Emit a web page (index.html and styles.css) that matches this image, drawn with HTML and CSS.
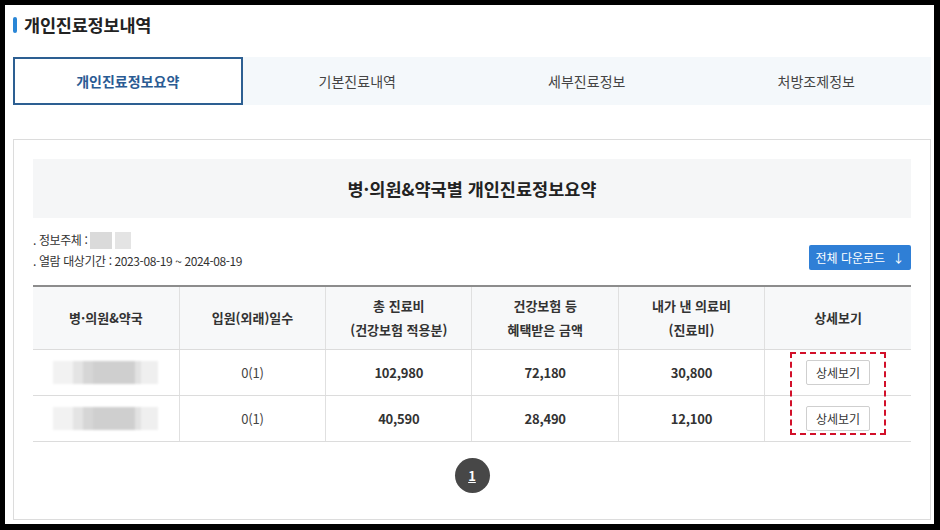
FILE: index.html
```html
<!DOCTYPE html>
<html lang="ko">
<head>
<meta charset="utf-8">
<link rel="stylesheet" href="styles.css">
</head>
<body>
<div class="page">
  <h2 class="title"><span class="bar"></span>개인진료정보내역</h2>
  <div class="tabs">
    <div class="tab active">개인진료정보요약</div>
    <div class="tab">기본진료내역</div>
    <div class="tab">세부진료정보</div>
    <div class="tab">처방조제정보</div>
  </div>
  <div class="box">
    <div class="summary-head">병·의원&amp;약국별 개인진료정보요약</div>
    <div class="info-row">
      <ul class="info">
        <li>. 정보주체 : <span class="blur-name"><i></i><i></i></span></li>
        <li>. 열람 대상기간 : 2023-08-19 ~ 2024-08-19</li>
      </ul>
      <button class="download">전체 다운로드 <span class="arrow">↓</span></button>
    </div>
    <div class="table-wrap">
      <table class="grid">
        <thead>
          <tr>
            <th>병·의원&amp;약국</th>
            <th>입원(외래)일수</th>
            <th>총 진료비<br>(건강보험 적용분)</th>
            <th>건강보험 등<br>혜택받은 금액</th>
            <th>내가 낸 의료비<br>(진료비)</th>
            <th>상세보기</th>
          </tr>
        </thead>
        <tbody>
          <tr>
            <td><span class="blur-cell"></span></td>
            <td class="plain">0(1)</td>
            <td>102,980</td>
            <td>72,180</td>
            <td>30,800</td>
            <td><button class="detail">상세보기</button></td>
          </tr>
          <tr>
            <td><span class="blur-cell"></span></td>
            <td class="plain">0(1)</td>
            <td>40,590</td>
            <td>28,490</td>
            <td>12,100</td>
            <td><button class="detail">상세보기</button></td>
          </tr>
        </tbody>
      </table>
      <div class="highlight"></div>
    </div>
    <div class="pager"><span class="page-num">1</span></div>
  </div>
</div>
</body>
</html>
```
FILE: styles.css
```css
* { box-sizing: border-box; }
html, body { margin: 0; padding: 0; }
body {
  background: #000;
  font-family: "Noto Sans CJK KR", "Noto Sans", sans-serif;
  color: #333;
  width: 940px;
  height: 530px;
  overflow: hidden;
}
.page {
  margin: 5px 6px 6px 5px;
  height: 519px;
  background: #fff;
  padding: 0 3px 0 8px;
  overflow: hidden;
}
.title {
  margin: 0;
  padding-top: 7px;
  height: 52px;
  display: flex;
  align-items: flex-start;
  font-size: 17.5px;
  font-weight: 700;
  color: #222;
  line-height: 25px;
  letter-spacing: -0.2px;
}
.bar {
  display: inline-block;
  width: 4px;
  height: 16px;
  background: #2a86d6;
  border-radius: 2px;
  margin: 5px 7px 0 0;
}
.tabs {
  display: grid;
  grid-template-columns: repeat(4, 1fr);
  height: 48px;
  background: #f4f8fb;
}
.tab {
  display: flex;
  align-items: center;
  justify-content: center;
  font-size: 14px;
  color: #444;
}
.tab.active {
  background: #fff;
  border: 2px solid #2d5f92;
  color: #2a5b93;
  font-weight: 700;
}
.box {
  margin-top: 34px;
  height: 381px;
  border: 1px solid #dcdcdc;
  padding: 19px 19px 0;
}
.summary-head {
  height: 59px;
  background: #f5f6f7;
  display: flex;
  align-items: center;
  justify-content: center;
  font-size: 17.5px;
  font-weight: 700;
  color: #222;
}
.info-row {
  display: flex;
  justify-content: space-between;
  align-items: flex-end;
  margin-top: 11px;
}
.info {
  list-style: none;
  margin: 0;
  padding: 0;
  font-size: 12px;
  color: #333;
  line-height: 21px;
  letter-spacing: -0.4px;
}
.blur-name {
  display: inline-flex;
  vertical-align: middle;
  gap: 3px;
  margin-top: -3px;
}
.blur-name i {
  display: block;
  width: 22px;
  height: 17px;
  background: #dadada;
}
.blur-name i + i {
  width: 16px;
  background: #e4e4e4;
}
.download {
  height: 25px;
  width: 102px;
  margin-bottom: 1px;
  border: 0;
  border-radius: 2px;
  background: #2f7fd6;
  color: #fff;
  font-family: inherit;
  font-size: 12px;
  padding: 0;
}
.download .arrow { margin-left: 4px; }
.table-wrap {
  position: relative;
  margin-top: 14px;
}
.grid {
  width: 100%;
  border-collapse: collapse;
  table-layout: fixed;
  border-top: 2px solid #8c8c8c;
}
.grid th, .grid td {
  border-left: 1px solid #e0e0e0;
  text-align: center;
  font-size: 13px;
}
.grid th:first-child, .grid td:first-child { border-left: 0; }
.grid th {
  height: 63px;
  background: #f7f8f9;
  font-weight: 700;
  color: #333;
  line-height: 24px;
  border-bottom: 1px solid #dcdcdc;
}
.grid td {
  height: 46px;
  font-weight: 700;
  color: #333;
  border-bottom: 1px solid #dcdcdc;
  letter-spacing: -0.2px;
}
.grid td.plain { font-weight: 400; color: #444; }
.blur-cell {
  display: block;
  width: 105px;
  height: 23px;
  margin-left: 19px;
  background: linear-gradient(90deg, #f2f2f2 0 20px, #e4e4e4 20px 30px, #d6d6d6 30px 40px, #cfcfcf 40px 82px, #e2e2e2 82px 88px, #efefef 88px);
  filter: blur(1px);
}
.detail {
  width: 64px;
  height: 25px;
  background: #fff;
  border: 1px solid #cfcfcf;
  border-radius: 2px;
  font-family: inherit;
  font-size: 12px;
  font-weight: 400;
  color: #333;
  padding: 0;
}
.highlight {
  position: absolute;
  left: 757px;
  top: 67px;
  width: 96px;
  height: 83px;
  border: 2px dashed #d2102a;
}
.pager {
  display: flex;
  justify-content: center;
  margin-top: 16px;
}
.page-num {
  width: 35px;
  height: 35px;
  border-radius: 50%;
  background: #474747;
  color: #fff;
  font-size: 13px;
  font-weight: 700;
  display: flex;
  align-items: center;
  justify-content: center;
  text-decoration: underline;
}
```
